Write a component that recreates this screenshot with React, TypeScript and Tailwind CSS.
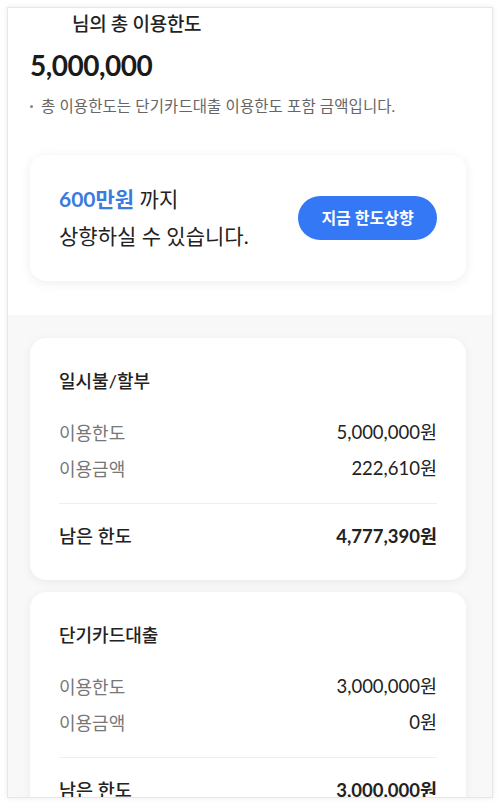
const font = { fontFamily: "Lato, 'Noto Sans CJK KR', 'Noto Sans', sans-serif" };

type Row = { label: string; value: string };

const sections: { title: string; rows: Row[]; remain: string }[] = [
  {
    title: "일시불/할부",
    rows: [
      { label: "이용한도", value: "5,000,000원" },
      { label: "이용금액", value: "222,610원" },
    ],
    remain: "4,777,390원",
  },
  {
    title: "단기카드대출",
    rows: [
      { label: "이용한도", value: "3,000,000원" },
      { label: "이용금액", value: "0원" },
    ],
    remain: "3,000,000원",
  },
];

function LimitCard({ title, rows, remain }: { title: string; rows: Row[]; remain: string }) {
  return (
    <div className="rounded-2xl bg-white px-[29px] pt-[31px] pb-[32px] shadow-[0_2px_10px_rgba(0,0,0,0.06)]">
      <p className="text-[18px] leading-6 font-medium text-[#222]">{title}</p>
      <div className="mt-[22px] flex flex-col">
        {rows.map((r) => (
          <div key={r.label} className="flex items-center justify-between h-9">
            <span className="text-[18px] text-[#777]">{r.label}</span>
            <span className="text-[18.5px] text-[#222]">{r.value}</span>
          </div>
        ))}
      </div>
      <div className="mt-4 h-px bg-[#eeeeee]" />
      <div className="mt-5 flex items-center justify-between leading-6">
        <span className="text-[18.5px] font-medium text-[#222]">남은 한도</span>
        <span className="text-[18.5px] font-bold text-[#222]">{remain}</span>
      </div>
    </div>
  );
}

export default function App() {
  return (
    <div className="w-[500px] h-[804px] bg-white p-[7px] pb-[6px]" style={font}>
      <div className="h-full border border-[#e6e6e6] shadow-[0_0_6px_rgba(0,0,0,0.08)] overflow-hidden flex flex-col">
        {/* Total limit */}
        <section className="bg-white pl-[22px] pr-[26px] pt-[4px] pb-[34px]">
          <div className="flex items-center h-6">
            <span className="w-[42px] select-none">&nbsp;</span>
            <span className="text-[19px] font-medium text-[#222] tracking-[-0.3px]">님의 총 이용한도</span>
          </div>
          <p className="mt-3 text-[28px] leading-[34px] font-bold text-[#1a1a1a] tracking-[-0.5px]">5,000,000</p>
          <p className="mt-[14px] flex items-center text-[15.5px] leading-5 text-[#666] tracking-[0.1px]">
            <span className="mr-[8px] inline-block w-[3px] h-[3px] rounded-full bg-[#888]" />
            총 이용한도는 단기카드대출 이용한도 포함 금액입니다.
          </p>

          <div className="mt-[39px] h-[126px] rounded-2xl bg-white px-[29px] flex items-center justify-between shadow-[0_2px_12px_rgba(0,0,0,0.07)]">
            <div className="text-[21px] leading-[37px] text-[#222] -mt-[2px]">
              <p>
                <span className="font-bold text-[#3b7be0]">600만원</span> 까지
              </p>
              <p>상향하실 수 있습니다.</p>
            </div>
            <button className="h-11 w-[139px] rounded-full bg-[#3478f5] text-white text-[16px] font-bold">
              지금 한도상향
            </button>
          </div>
        </section>

        {/* Detail cards */}
        <section className="flex-1 bg-[#f8f8f8] pl-[22px] pr-[26px] pt-[23px] flex flex-col gap-3">
          {sections.map((s) => (
            <LimitCard key={s.title} {...s} />
          ))}
        </section>
      </div>
    </div>
  );
}
